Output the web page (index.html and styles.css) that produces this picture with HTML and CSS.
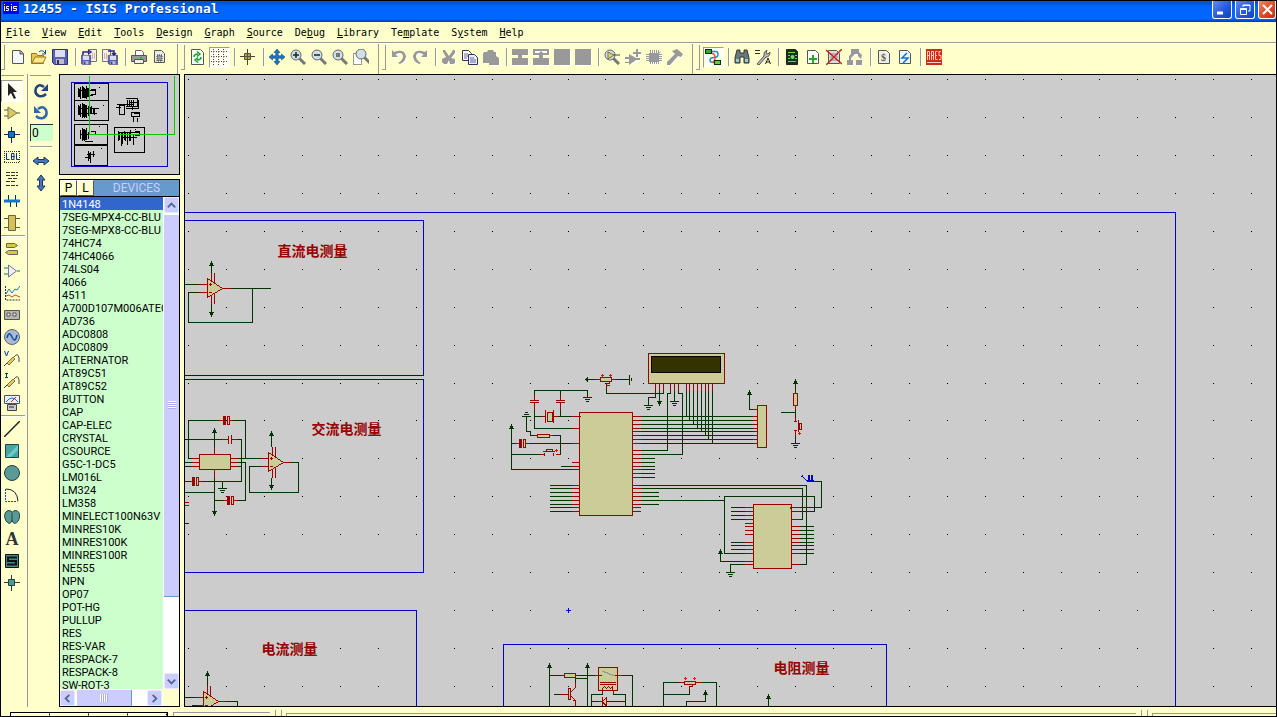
FILE: index.html
```html
<!DOCTYPE html>
<html lang="en">
<head>
    <meta charset="UTF-8">
    <meta name="viewport" content="width=device-width, initial-scale=1.0">
    <title>12455 - ISIS Professional</title>
    <link rel="stylesheet" href="styles.css">
</head>
<body>
<div class="window">
    <header class="titlebar">
        <svg class="logo" width="16" height="12" viewBox="0 0 16 12"><rect width="16" height="12" fill="#00f"/><path d="M1.500 4v5M1.500 2v1M3 8.500h2.500V6.500h-2v-2H6M8.500 4v5M8.500 2v1M10 8.500h3.500V6.500h-3v-2H14" stroke="#fff" fill="none"/></svg>
        <h1>12455 - ISIS Professional</h1>
        <div class="win-buttons">
            <button class="win-btn" aria-label="Minimize"><svg width="18" height="18"><path d="M4 12h6" stroke="#fff" stroke-width="3"/></svg></button>
            <button class="win-btn" aria-label="Restore"><svg width="18" height="18" fill="none" stroke="#fff"><path d="M7 6V4h7v6h-2M7 4.500h7"/><path d="M4.500 7.500h6v6h-6zM4 8.500h7"/></svg></button>
            <button class="win-btn close" aria-label="Close"><svg width="18" height="18"><path d="M4 4l9 9M13 4l-9 9" stroke="#fff" stroke-width="2"/></svg></button>
        </div>
    </header>

    <nav class="menubar">
        <button><u>F</u>ile</button><button><u>V</u>iew</button><button><u>E</u>dit</button><button><u>T</u>ools</button><button><u>D</u>esign</button><button><u>G</u>raph</button><button><u>S</u>ource</button><button>De<u>b</u>ug</button><button><u>L</u>ibrary</button><button>Te<u>m</u>plate</button><button>S<u>y</u>stem</button><button><u>H</u>elp</button>
    </nav>

    <div class="toolbar">
        <div class="group">
            <button aria-label="New"><svg viewBox="0 0 16 16"><path d="M2.500 1.500h8l3 3v10h-11z" fill="#f4f8fc" stroke="#555"/><path d="M10 2v3h3" fill="#aaa" stroke="#555"/></svg></button>
            <button aria-label="Open"><svg viewBox="0 0 16 16"><path d="M.5 14.500v-10h5l1 2h6v8z" fill="#e8c850" stroke="#997a20"/><path d="M1 14l3-6h11l-3 6z" fill="#ffe98a" stroke="#997a20"/><path d="M8 3q3-3 6 1M14.500 1v4H11" fill="none" stroke="#148"/></svg></button>
            <button aria-label="Save"><svg viewBox="0 0 16 16"><use href="#disk"/></svg></button>
            <i class="sep"></i>
            <button aria-label="Import"><svg viewBox="0 0 16 16"><path d="M7.500.500h8v12h-8z" fill="#f4f0ea" stroke="#777"/><path d="M11 5h4M11 7h4M11 9h4" stroke="#c66" stroke-dasharray="1 1"/><g transform="translate(0 6) scale(.62)"><use href="#disk"/></g><path d="M2 6V3h6M7 1l3 2-3 2" fill="none" stroke="#228" stroke-width="1.500"/></svg></button>
            <button aria-label="Export"><svg viewBox="0 0 16 16"><path d="M.5.500h8v12h-8z" fill="#f4f0ea" stroke="#777"/><path d="M2 5h4M2 7h4M2 9h4" stroke="#c66" stroke-dasharray="1 1"/><g transform="translate(6 6) scale(.62)"><use href="#disk"/></g><path d="M6 2h6v3M10 4l2 2 2-2" fill="none" stroke="#228" stroke-width="1.500"/></svg></button>
            <i class="sep"></i>
            <button aria-label="Print"><svg viewBox="0 0 16 16"><path d="M4.500 6V1.500h6l2 2V6" fill="#fff" stroke="#666"/><path d="M.5 6.500h15v6H.5z" fill="#999" stroke="#555"/><path d="M3.500 10.500h9v4h-9z" fill="#eee" stroke="#555"/><path d="M9 8h2v2H9z" fill="#0c0"/></svg></button>
            <button aria-label="Print area"><svg viewBox="0 0 16 16"><path d="M2.500 1.500h7l3 3v9h-10z" fill="#e8ece8" stroke="#555"/><path d="M5 6h5v6H5z" fill="#999" stroke="#333" stroke-dasharray="1 1"/></svg></button>
        </div>
        <div class="group">
            <button aria-label="Redraw"><svg viewBox="0 0 16 16"><path d="M1.500.5h9l3 3v12h-12z" fill="#f5fff5" stroke="#555"/><path d="M4 8q0-3 4-3M7 2.500l3 2.500-3 2.500M11 8q0 3-4 3M8 13.500L5 11l3-2.500" fill="none" stroke="#1a9a30" stroke-width="1.500"/></svg></button>
            <button class="pressed" aria-label="Grid"><svg viewBox="0 0 16 16"><path d="M0 2.500h16M0 7.500h16M0 12.500h16M2.500 0v16M7.500 0v16M12.500 0v16" stroke="#444" stroke-dasharray="1 1.500"/></svg></button>
            <i class="sep"></i>
            <button aria-label="Origin"><svg viewBox="0 0 16 16"><path d="M7.500 0v16M0 7.500h15" stroke="#442"/><path d="M4.500 4.500h6v6h-6z" fill="#b9a23a" stroke="#554"/><path d="M7.500 5v5M5 7.500h5" stroke="#554"/></svg></button>
            <i class="sep"></i>
            <button aria-label="Pan"><svg viewBox="0 0 16 16"><path d="M8 0l3 3.500H9.200v3.300h3.300V5L16 8l-3.500 3V9.200H9.200v3.300H11L8 16l-3-3.500h1.800V9.200H3.500V11L0 8l3.500-3v1.800h3.300V3.500H5z" fill="#1a78d0" stroke="#035" stroke-width=".5"/></svg></button>
            <button aria-label="Zoom in"><svg viewBox="0 0 16 16"><use href="#lens"/><path d="M3 6h6M6 3v6" stroke="#222" stroke-width="1.500"/></svg></button>
            <button aria-label="Zoom out"><svg viewBox="0 0 16 16"><use href="#lens"/><path d="M3 6h6" stroke="#222" stroke-width="1.500"/></svg></button>
            <button aria-label="Zoom all"><svg viewBox="0 0 16 16"><use href="#lens"/><path d="M4 4h4v4H4z" fill="#777"/></svg></button>
            <button aria-label="Zoom area"><svg viewBox="0 0 16 16"><path d="M.5 4.500h8v11h-8z" fill="#fff" stroke="#333" stroke-dasharray="1 1"/><g transform="translate(2 -1)"><use href="#lens"/></g></svg></button>
        </div>
        <div class="group">
            <button class="off" aria-label="Undo"><svg viewBox="0 0 16 16"><path d="M1 1v7h6L4.500 5.500Q11 2 12 7q0 4-5 7l2 1q6-3 6-8Q13-1 3 3z"/></svg></button>
            <button class="off" aria-label="Redo"><svg viewBox="0 0 16 16"><path d="M15 1v7H9l2.500-2.500Q5 2 4 7q0 4 5 7l-2 1Q1 12 1 7 3-1 13 3z"/></svg></button>
            <i class="sep"></i>
            <button class="off" aria-label="Cut"><svg viewBox="0 0 16 16"><path d="M2 1h2l4 6 4-6h2v3l-4 5 4 1v4l-2 1h-3l-1-4-2 4H3l-2-2v-3l4-2-3-5z"/></svg></button>
            <button aria-label="Copy"><svg viewBox="0 0 16 16"><path d="M.5 1.500h6l3 3v7h-9z" fill="#fff" stroke="#335"/><path d="M6.500 5.500h6l3 3v7h-9z" fill="#e4efff" stroke="#335"/><path d="M2 5h4M2 7h4M2 9h3M8 9h4M8 11h6M8 13h6" stroke="#669"/></svg></button>
            <button class="off" aria-label="Paste"><svg viewBox="0 0 16 16"><path d="M1 3h3l1-2h5l1 2h2v4l3 2v7H6v-2H0V5z"/></svg></button>
            <i class="sep"></i>
            <button class="off" aria-label="Block copy"><svg viewBox="0 0 16 16"><path d="M0 0h16v6h-6v3h6v7H0V9h6V6H0z"/></svg></button>
            <button class="off" aria-label="Block move"><svg viewBox="0 0 16 16"><path d="M0 0h16v6h-6v3h6v7H0V9h6V6H0z"/><path d="M2 2h12v2h-4L8 2 6 4H2z" fill="#fff"/></svg></button>
            <button class="off" aria-label="Block rotate"><svg viewBox="0 0 16 16"><path d="M0 0h16v16H0z"/></svg></button>
            <button class="off" aria-label="Block delete"><svg viewBox="0 0 16 16"><path d="M0 0h16v16H0z"/></svg></button>
            <i class="sep"></i>
            <button aria-label="Pick parts"><svg viewBox="0 0 16 16"><use href="#lens"/><path d="M4 3l6 3-6 4z" fill="#dcd27a" stroke="#774"/><path d="M10 6h6" stroke="#444"/></svg></button>
            <button class="off" aria-label="Make device"><svg viewBox="0 0 16 16"><path d="M4 5l7 4h4v2h-4l-7 5v-2H0v-1h4v-3H0V8h4zM11 0h2v3h3v2h-3v3h-2V5H8V3h3z"/></svg></button>
            <button class="off" aria-label="Packaging"><svg viewBox="0 0 16 16"><path d="M3 4h9l3-2-2 3v8H3z"/><path d="M4.500 1v14M6.500 1v14M8.500 1v14M10.500 1v14M12.500 1v14M0 5.500h16M0 7.500h16M0 9.500h16M0 11.500h16" stroke="#999"/></svg></button>
            <button class="off" aria-label="Decompose"><svg viewBox="0 0 16 16"><path d="M5 2l5-2 6 5-2 3-3-1-8 9H0v-3l8-8z"/></svg></button>
        </div>
        <div class="group last">
            <button class="pressed" aria-label="Wire autorouter"><svg viewBox="0 0 16 16"><path d="M6 2.500h5q2 0 2 3t-4 3q-4 0-4 3 0 2 4 2" fill="none" stroke="#28c" stroke-width="1.500"/><path d="M7 4.500q3 0 3 4t-3 5" fill="none" stroke="#e53" stroke-width="1.500"/><rect x=".5" y=".5" width="6" height="4" fill="#3a3" stroke="#030"/><rect x="9.500" y="11.500" width="6" height="4" fill="#6c3" stroke="#030"/></svg></button>
            <i class="sep"></i>
            <button aria-label="Search"><svg viewBox="0 0 16 16"><path d="M3 1h3v3h4V1h3l2 8v5h-5V8H6v6H1V9z" fill="#667a7a" stroke="#333"/><path d="M2 10h3v3H2zM11 10h3v3h-3z" fill="#9cc"/></svg></button>
            <button aria-label="Property assignment"><svg viewBox="0 0 16 16"><path d="M0 1.500h5M0 4.500h5" stroke="#333"/><path d="M2 15l7-8q-1-4 3-6l-1 3 2 1 2-2q0 5-4 5l-7 8z" fill="#bbb" stroke="#555"/><path d="M10.500 15l2.500-6 2.500 6M11 13h4" fill="none" stroke="#222"/></svg></button>
            <i class="sep"></i>
            <button aria-label="Design explorer"><svg viewBox="0 0 16 16"><path d="M2.500.5h9l2 2v13h-11z" fill="#132" stroke="#222"/><path d="M4 3.500h7M4 6.500h2M4 9.500h2M4 12.500h8M11 6.500h2M11 9.500h2" stroke="#6d4"/><circle cx="8.500" cy="8" r="2" fill="#8c8"/></svg></button>
            <button aria-label="New sheet"><svg viewBox="0 0 16 16"><path d="M2.500 1.500h8l3 3v10h-11z" fill="#fff" stroke="#555"/><path d="M8 6v8M4 10h8" stroke="#2a2" stroke-width="2"/></svg></button>
            <button aria-label="Remove sheet"><svg viewBox="0 0 16 16"><path d="M2.500 1.500h8l3 3v10h-11z" fill="#ddd" stroke="#555"/><path d="M4 5h8M4 8h8M4 11h8" stroke="#888"/><path d="M0 1l16 14M16 0L0 16" stroke="#c22" stroke-width="1.500"/></svg></button>
            <button class="off" aria-label="Exit to parent"><svg viewBox="0 0 16 16"><path d="M4 0h8v3l3 3-1 4-3-3V5H8L4 9v2h2v5H0v-5h2V7l2-2zM9 11h6v5H9z"/></svg></button>
            <i class="sep"></i>
            <button aria-label="Bill of materials"><svg viewBox="0 0 16 16"><path d="M2.500 1.500h8l3 3v10h-11z" fill="#eee" stroke="#555"/><text x="5" y="12" class="dollar">$</text></svg></button>
            <button aria-label="Electrical check"><svg viewBox="0 0 16 16"><path d="M2.500 1.500h8l3 3v10h-11z" fill="#eef6ff" stroke="#555"/><path d="M10 4L5 9h6l-5 5" fill="none" stroke="#17c" stroke-width="1.500"/></svg></button>
            <i class="sep"></i>
            <button aria-label="ARES"><svg viewBox="0 0 16 16"><path d="M0 0h16v16H0z" fill="#d32a10"/><path d="M1.500 11V2.500h2V11M1 6.500h3M5.500 11V2.500h2v4h-2M7.500 7v4M11.500 2.500h-2v8h2M9 6.500h2M15 2.500h-2v4h2v4h-2M1 13.500h14" fill="none" stroke="#fcc"/></svg></button>
        </div>
    </div>

    <main class="workspace">
        <aside class="modes">
            <i class="grip-top"></i>
            <button class="pressed" aria-label="Selection"><svg viewBox="0 0 16 16"><path d="M4 0v13l3-3 3 6 2-1-3-6h4z" fill="#222"/></svg></button>
            <button aria-label="Component"><svg viewBox="0 0 16 16"><path d="M4 2l9 6-9 6z" fill="#dcc860" stroke="#775"/><path d="M0 5h4M0 11h4M13 8h3" stroke="#554"/></svg></button>
            <button aria-label="Junction"><svg viewBox="0 0 16 16"><path d="M7.500 0v16M0 7.500h16" stroke="#134"/><path d="M4.500 4.500h6v6h-6z" fill="#17b" stroke="#026"/></svg></button>
            <button aria-label="Wire label"><svg viewBox="0 0 16 16"><path d="M0 2.500h16M0 13.500h16M.5 2v12M15.500 2v12" stroke="#333" stroke-dasharray="1 1"/><path d="M2.500 4v6.500h3M7.500 4.500h2.500v6H7.500zM7.500 7.500h3M12.500 4v6.500h3" fill="none" stroke="#038"/></svg></button>
            <button aria-label="Text script"><svg viewBox="0 0 16 16"><path d="M2 1.500h12M2 4.500h12M4 7.500h10M2 10.500h10M2 14.500h12" stroke="#333" stroke-dasharray="4 1"/></svg></button>
            <button aria-label="Bus"><svg viewBox="0 0 16 16"><path d="M4.500 7v-5M11.500 2v5M6.500 8v6M12.500 8v6" stroke="#035"/><path d="M0 8h16" stroke="#17c" stroke-width="3"/></svg></button>
            <button aria-label="Subcircuit"><svg viewBox="0 0 16 16"><path d="M0 3.500h16M0 12.500h16" stroke="#554"/><path d="M4.500.5h7v15h-7z" fill="#d8c058" stroke="#664"/></svg></button>
            <i class="rule"></i>
            <button aria-label="Terminals"><svg viewBox="0 0 16 16"><path d="M2.500 2.500h8l3 2-3 2h-8zM13.500 9.500h-9l-3 2 3 2h9z" fill="#d8c840" stroke="#665"/></svg></button>
            <button aria-label="Device pins"><svg viewBox="0 0 16 16"><path d="M4.500 2l8 6-8 6z" fill="#eef" stroke="#778"/><path d="M0 5h4M0 11h4M13 8h3" stroke="#07a"/></svg></button>
            <button aria-label="Graph"><svg viewBox="0 0 16 16"><path d="M1.500 1v14h15" fill="none" stroke="#333" stroke-dasharray="2 1"/><path d="M2 9l3-5 3 4 3-4 2 1 3-4" fill="none" stroke="#17c"/><path d="M2 11l3-1 3 2 3-2 5 2" fill="none" stroke="#d42"/></svg></button>
            <button aria-label="Tape recorder"><svg viewBox="0 0 16 16"><path d="M.5 3.500h15v9H.5z" fill="#b5b5ad" stroke="#555"/><path d="M3 6h3v3H3zM9 6h3v3H9z" fill="#eee" stroke="#555"/></svg></button>
            <button aria-label="Generator"><svg viewBox="0 0 16 16"><circle cx="8" cy="8" r="7.500" fill="#b0b8d0" stroke="#567"/><path d="M3 9q2-8 5-1t5-2" fill="none" stroke="#05a" stroke-width="1.500"/></svg></button>
            <button aria-label="Voltage probe"><svg viewBox="0 0 16 16"><path d="M.5 0l2 5 2-5" fill="none" stroke="#03a"/><use href="#probe"/></svg></button>
            <button aria-label="Current probe"><svg viewBox="0 0 16 16"><path d="M1 .5h3M2.500 0v5M1 4.500h3" stroke="#03a"/><use href="#probe"/></svg></button>
            <button aria-label="Instruments"><svg viewBox="0 0 16 16"><path d="M.5.500h15v8H.5z" fill="#eef" stroke="#555"/><path d="M2 7q6-8 12 0" fill="none" stroke="#17c"/><path d="M7 7l5-5" stroke="#d20"/><path d="M3.500 9.500h9v6h-9z" fill="#ccc" stroke="#444"/><path d="M5 12h5" stroke="#222"/></svg></button>
            <i class="rule"></i>
            <button aria-label="Line"><svg viewBox="0 0 16 16"><path d="M0 16L16 0" stroke="#222" stroke-width="1.500"/></svg></button>
            <button aria-label="Box"><svg viewBox="0 0 16 16"><path d="M1.500 1.500h13v13h-13z" fill="#4aa5a0" stroke="#244"/><path d="M2 14L14 2v5l-7 7z" fill="#6cc"/></svg></button>
            <button aria-label="Circle"><svg viewBox="0 0 16 16"><circle cx="8" cy="8" r="7.500" fill="#5a9a96" stroke="#244"/></svg></button>
            <button aria-label="Arc"><svg viewBox="0 0 16 16"><path d="M1.500 2v12.500h12" fill="none" stroke="#05a" stroke-dasharray="2 1"/><path d="M2 2q11 0 12 12" fill="none" stroke="#222"/></svg></button>
            <button aria-label="Path"><svg viewBox="0 0 16 16"><path d="M4 1.500q4 0 4 2 1-2 4-2 4 1 3.500 6-.5 6-5 7-2-1-2.500-3-1 3-3 3-4-2-4.500-7 0-5 3.500-6z" fill="#5a9a96" stroke="#244"/><path d="M8 4v8" stroke="#244"/></svg></button>
            <button class="letter" aria-label="Text">A</button>
            <button aria-label="Symbol"><svg viewBox="0 0 16 16"><path d="M1.500 1.500h13v13h-13z" fill="#488" stroke="#111"/><path d="M13 4.500H4V8h8v3.500H3" fill="none" stroke="#111" stroke-width="2"/></svg></button>
            <button aria-label="Marker"><svg viewBox="0 0 16 16"><path d="M7.500 0v16M0 7.500h16" stroke="#333"/><path d="M4.500 4.500h6v6h-6z" fill="#4a9a9a" stroke="#244"/></svg></button>
        </aside>

        <aside class="orient">
            <i class="grip-top"></i>
            <button aria-label="Rotate clockwise"><svg viewBox="0 0 16 16"><path d="M11 4Q6 0 3 5q-2 6 3 8 4 1 7-2" fill="none" stroke="#247" stroke-width="2.500"/><path d="M15 1v7H8z" fill="#247"/></svg></button>
            <button aria-label="Rotate anticlockwise"><svg viewBox="0 0 16 16"><path d="M5 4q5-4 8 1 2 6-3 8-4 1-7-2" fill="none" stroke="#36a" stroke-width="2.500"/><path d="M1 1v7h7z" fill="#36a"/></svg></button>
            <input type="text" value="0" aria-label="Angle">
            <i class="rule"></i>
            <button aria-label="Mirror horizontally"><svg viewBox="0 0 16 16"><path d="M0 8l5-4v2.500h6V4l5 4-5 4V9.500H5V12z" fill="#47b" stroke="#235"/></svg></button>
            <button aria-label="Mirror vertically"><svg viewBox="0 0 16 16"><path d="M8 0l4 5H9.500v6H12l-4 5-4-5h2.500V5H4z" fill="#47b" stroke="#235"/></svg></button>
        </aside>

        <section class="side">
            <svg class="overview" shape-rendering="crispEdges">
                <g transform="translate(-59.500 -74.500)" fill="none" stroke="#000">
                    <path d="M71 82h96v84H71z" stroke="#00c"/>
                    <path d="M74 83h34v17H74zM74 100h34v20H74zM74 124h33v20H74zM74 145h33v20H74zM114 127h30v25h-30z"/>
                    <path d="M78 87v9M80 86v12M82 85v12M84 87v10M86 85v13M88 87v9M80 90h14M90 89h5v5h-5M84 95h8"/>
                    <path d="M79 88v8M83 86v11M85 88v9M87 87v9"/>
                    <path d="M78 104v10M80 103v13M82 102v15M84 103v14M86 104v13M88 105v10M91 105v8M94 108v6M78 108h20M80 113h16"/>
                    <path d="M79 105v9M83 103v13M85 104v12M90 106v7M93 107v6"/>
                    <path d="M80 129v9M82 127v13M84 128v12M86 127v12M88 131v7M80 134h14M90 131h5v3M84 141h8M83 128v11M85 129v10"/>
                    <path d="M88 150v10M90 151v11M86 154h8M93 150v6M84 157h4M89 152v6"/>
                    <path d="M116 104h4M115 107h5M119 105v9h5v-9zM125 98h12v8h-12M127 99v6M129 99v6M131 99v6M133 99v6M128 102h8M125 108h12M138 99v9M131 112h8v4h-8zM133 116v5M137 117v4M120 104h12M133 113h5M132 106v3"/>
                    <path d="M118 130v10M121 131v14M124 130v9M127 132v12M130 129v11M133 134v10M118 132h20M120 137h16M119 131v8M122 132v11M125 131v9M129 131v9M134 131h5v4h-5"/>
                    <path d="M98 87h1M102 105h1M98 126h1M100 148h1M134 129h1"/>
                    <path d="M89 75v59h85V75" stroke="#0c0"/>
                </g>
            </svg>
            <div class="devices">
                <div class="dev-head"><button>P</button><button>L</button><h2>DEVICES</h2></div>
                <div class="dev-body">
                    <ul role="listbox" aria-label="Devices">
                        <li role="option" aria-selected="true">1N4148</li><li role="option">7SEG-MPX4-CC-BLU</li><li role="option">7SEG-MPX8-CC-BLU</li><li role="option">74HC74</li><li role="option">74HC4066</li><li role="option">74LS04</li><li role="option">4066</li><li role="option">4511</li><li role="option">A700D107M006ATEC</li><li role="option">AD736</li><li role="option">ADC0808</li><li role="option">ADC0809</li><li role="option">ALTERNATOR</li><li role="option">AT89C51</li><li role="option">AT89C52</li><li role="option">BUTTON</li><li role="option">CAP</li><li role="option">CAP-ELEC</li><li role="option">CRYSTAL</li><li role="option">CSOURCE</li><li role="option">G5C-1-DC5</li><li role="option">LM016L</li><li role="option">LM324</li><li role="option">LM358</li><li role="option">MINELECT100N63V</li><li role="option">MINRES10K</li><li role="option">MINRES100K</li><li role="option">MINRES100R</li><li role="option">NE555</li><li role="option">NPN</li><li role="option">OP07</li><li role="option">POT-HG</li><li role="option">PULLUP</li><li role="option">RES</li><li role="option">RES-VAR</li><li role="option">RESPACK-7</li><li role="option">RESPACK-8</li><li role="option">SW-ROT-3</li>
                    </ul>
                    <div class="vscroll">
                        <button aria-label="Scroll up"><svg viewBox="0 0 14 14"><path d="M3 9l4-4 4 4"/></svg></button>
                        <div class="thumb"><i></i></div>
                        <button aria-label="Scroll down"><svg viewBox="0 0 14 14"><path d="M3 5l4 4 4-4"/></svg></button>
                    </div>
                </div>
                <div class="hscroll">
                    <button aria-label="Scroll left"><svg viewBox="0 0 14 14"><path d="M9 3L5 7l4 4"/></svg></button>
                    <div class="thumb"><i></i></div>
                    <button aria-label="Scroll right"><svg viewBox="0 0 14 14"><path d="M5 3l4 4-4 4"/></svg></button>
                </div>
            </div>
        </section>

        <svg class="sheet" shape-rendering="crispEdges">
            <defs>
                <g id="up"><path d="M0 0v5M-1 2h2M-1 3h2M-2 4h4"/></g>
                <g id="down"><path d="M0 0v-5M-1-2h2M-1-3h2M-2-4h4"/></g>
                <g id="gnd"><path d="M-4 0h8M-2 2h4M-1 4h2"/></g>
                <g id="plus"><path d="M-1 0h2M0-1v2" stroke="#f00"/></g>
                <g id="opamp" class="part"><path d="M0 0v19l15-9z"/><path d="M3 5v2M2 6h2M2 14h2M4-5v7M7-5v9M4 17v8M7 15v10M-8 6h8M-8 14h8M15 10h8"/></g>
                <g id="ecap" class="part"><path d="M0-4h2v8H0zM4-4h2v8H4z"/><path d="M1-4v8" stroke-dasharray="2 1"/><path d="M-4 0h4M6 0h4"/></g>
            </defs>
            <g transform="translate(-184.500 -74.500)">
                <g id="dots" fill="#000"></g>
                <g class="frame">
                    <path d="M185 212H1175V706M185 220H423V375H185M185 379H423V572H185M185 610H416V706M503 706V644H886V706"/>
                    <path d="M566 610h4M568 608v4"/>
                </g>

                <!-- dc voltage -->
                <use href="#opamp" x="207" y="278"/>
                <g class="wire">
                    <path d="M211 264V272M185 284H198M198 292H188V322H252V288M231 288H270M211 304V314"/>
                    <use href="#up" x="211" y="261"/><use href="#down" x="211" y="316"/>
                </g>

                <!-- ac voltage -->
                <use href="#opamp" x="268" y="452"/>
                <use href="#ecap" x="223" y="420"/><use href="#ecap" x="192" y="481"/><use href="#ecap" x="227" y="500"/>
                <g class="part">
                    <path d="M199 454H230V469H199z"/>
                    <path d="M192 458H199M192 462H199M192 466H199M231 458H237M231 462H237M231 466H237M214 447V454M214 470V477M222 439H228V435V443M231 435V443M231 439H237M185 502H188M185 505H188"/>
                </g>
                <g class="wire">
                    <path d="M271 434V446M271 478V488M260 466H249V492H298V462H291M191 458H188V420H218M233 420H245V458M238 458H260M185 462H191M185 466H191M238 462H245V500H238M238 466H241M214 430V446M185 439H221M238 439H241V481H203M185 481H188M222 481V488M214 478V513M185 492H214M214 500H222M185 523H188"/>
                    <use href="#up" x="271" y="431"/><use href="#down" x="271" y="489"/><use href="#up" x="214" y="428"/><use href="#down" x="214" y="515"/><use href="#gnd" x="222" y="488"/>
                </g>

                <!-- mcu -->
                <g class="part">
                    <path d="M579 412H632V515H579z"/>
                    <path d="M572 416H580M572 428H579M572 443H579M572 462H579M572 466H579M572 469H579M572 485H579M572 488H579M572 492H579M572 496H579M572 500H579M572 504H579M572 507H579M572 511H579"/>
                    <path d="M633 416H640M633 420H640M633 424H640M633 428H640M633 431H640M633 435H640M633 439H640M633 443H640M633 450H640M633 454H640M633 458H640M633 462H640M633 466H640M633 469H640M633 473H640M633 477H640M633 485H640M633 488H640M633 492H640M633 496H640M633 500H640M633 504H640M633 507H640M633 511H640"/>
                    <path class="body" d="M547 412H552V421H547zM537 434H549V437H537zM546 449H552V451H546zM600 377H611V381H600z"/>
                    <path d="M545 410V422M553 410V422M541 416H545M553 416H557M534 394V400M530 400H538M530 402H538M534 403V409M560 394V400M556 400H564M556 402H564M560 403V409"/>
                    <path d="M533 435H537M550 435H554M543 451H554M539 454H543M556 454H559M544 453v2M553 453v2M594 379H600M611 379H617M609 382V383H606V387M607 385h2"/>
                </g>
                <use href="#ecap" x="519" y="443"/>
                <use href="#plus" x="556" y="450"/><use href="#plus" x="602" y="375"/><use href="#plus" x="610" y="375"/>
                <g class="wire">
                    <path d="M550 485H571M550 488H571M550 492H571M550 496H571M550 500H571M550 504H571M550 507H571M550 511H571M561 466H571M571 469H511V427M530 443H571M511 443H515M571 428H534V410M534 416H541M558 416H571M560 410V416M534 394V390H587V397M560 390V394M526 416V431H530V435H533M554 435H560V454M511 454H539"/>
                    <path d="M522 416H530M524 414H528M525 412H527M585 379H594M617 379H629M629 375V384M631 378V380M606 388V393H663V391"/>
                    <path d="M587 377v4M586 378v2"/>
                    <use href="#up" x="511" y="424"/><use href="#gnd" x="587" y="397"/>
                </g>

                <!-- lcd -->
                <g class="part">
                    <path d="M648 353H724V383H648z"/>
                    <path d="M655 384V390M659 384V390M663 384V390M670 384V390M674 384V390M678 384V390M686 384V390M689 384V390M693 384V390M697 384V390M701 384V390M705 384V390M708 384V390M712 384V390"/>
                </g>
                <path d="M651 356H720V372H651z" fill="#330" stroke="#000"/>
                <g class="wire">
                    <path d="M655 391V397H648V404M659 391V403M670 391V393H667V450H641M674 391V401M678 391V393H682V454H641"/>
                    <path d="M686 391V416M689 391V420M693 391V424M697 391V428M701 391V431M705 391V435M708 391V439M712 391V443"/>
                    <path d="M641 416H752M641 420H752M641 424H752M641 428H752M641 431H752M641 435H752M641 439H752M641 443H752"/>
                    <path d="M641 458H654M641 462H654M641 466H654M641 469H654M641 473H654M641 477H654M641 492H658M641 496H658M641 504H658"/>
                    <use href="#gnd" x="648" y="405"/><use href="#gnd" x="674" y="401"/><use href="#down" x="659" y="405"/>
                </g>

                <!-- connector and reset button -->
                <g class="part">
                    <path d="M757 405H766V447H757zM793 393H797V405H793zM799 423H801V429H799z"/>
                    <path d="M753 409H757M753 416H757M753 420H757M753 424H757M753 428H757M753 431H757M753 435H757M753 439H757M753 443H757M795 390V393M795 406V409M795 417V420M794 421h2M794 430h2M798 420V431M795 431V435"/>
                </g>
                <use href="#plus" x="799" y="433"/>
                <g class="wire">
                    <path d="M752 409H749V393M795 383V389M795 410V417M781 412H795M795 436V443"/>
                    <use href="#up" x="749" y="390"/><use href="#up" x="795" y="379"/><use href="#gnd" x="795" y="443"/>
                </g>

                <!-- adc -->
                <g class="part">
                    <path d="M753 504H791V568H753z"/>
                    <path d="M792 507H799M792 511H799M792 519H799M792 526H799M792 530H799M792 534H799M792 538H799M792 542H799M792 545H799M792 549H799M792 553H799M792 564H799M790 507v1"/>
                    <path d="M745 507H752M745 511H752M745 515H752M745 519H752M745 523H752M745 526H752M745 530H752M745 534H752M745 542H752M745 545H752M745 549H752M745 553H752M745 561H752M745 564H752"/>
                </g>
                <g class="wire">
                    <path d="M641 485H806V564H800M641 488H802V519H800M641 500H724M744 553H724V496H814V511H800M807 481H821V507H800"/>
                    <path d="M800 526H813M800 530H813M800 534H813M800 538H813M800 542H813M800 545H813M800 549H813M800 553H813"/>
                    <path d="M731 507H744M731 511H744M731 515H744M731 519H744M731 542H744M731 545H744M731 549H744M744 561H720V553M744 564H730V572"/>
                    <use href="#up" x="720" y="549"/><use href="#gnd" x="730" y="572"/>
                </g>
                <path class="frame" d="M806 480H813M808 475V480M809 475V480M811 475V480M812 475V480M801 476h1M802 475h0M803 477h0M804 478h0M805 479h0"/>

                <!-- current -->
                <use href="#opamp" x="203" y="691"/>
                <g class="wire">
                    <path d="M207 673V685M185 697H194M192 705H195M227 701H237V706"/>
                    <use href="#up" x="207" y="671"/>
                </g>

                <!-- resistance -->
                <g class="part">
                    <path d="M564 673H575V677H564zM598 667H617V690H598zM568 688H570V699H568zM684 681H695V684H684zM602 701L606 697V706z"/>
                    <path d="M560 675H564M576 675H580M560 694H567M571 691L575 687V682M571 696L575 700V706M573 700h2M594 675H601M614 675H622M600 682H615M600 684H615M602 694V688L604 686L606 688L608 686L610 688L612 686L613 694M602 697V706M597 701H602M678 682H684M696 682H702M692 685V686H689V690"/>
                    <path d="M602 671l4 1 4 2 4 1" stroke="#999"/>
                </g>
                <use href="#plus" x="685" y="678"/><use href="#plus" x="694" y="678"/>
                <g class="wire">
                    <path d="M549 666V706M549 675H560M580 675H594M587 666V706M575 681V678H587M554 694H560M622 675H632V706M602 694H591V706M613 694H625V706M591 701H597M607 701H625"/>
                    <path d="M678 682H663V706M702 682H716V706M663 694H689V690M705 692V701H686V706M768 697V706"/>
                    <use href="#up" x="549" y="663"/><use href="#up" x="587" y="663"/><use href="#up" x="705" y="690"/><use href="#up" x="768" y="694"/>
                </g>

                <g class="caption">
                    <text x="277" y="255">直流电测量</text>
                    <text x="311" y="433">交流电测量</text>
                    <text x="261" y="653">电流测量</text>
                    <text x="773" y="672">电阻测量</text>
                </g>
            </g>
        </svg>
    </main>

    <footer class="statusbar">
        <div class="play"><button aria-label="Play"></button><button aria-label="Step"></button><button aria-label="Pause"></button><button aria-label="Stop"></button></div>
        <div class="field messages"></div>
        <i></i>
        <div class="field sheetname"></div>
        <i></i>
        <div class="field coords"></div>
    </footer>
</div>

<!-- shared icon pieces -->
<svg class="defs" aria-hidden="true">
    <g id="disk"><path d="M.5.500h15v15h-13l-2-2z" fill="#5a62b8" stroke="#336"/><path d="M3 1h10v7H3z" fill="#dde"/><path d="M4 10h8v5H4z" fill="#bbc"/><path d="M5 11h2v4H5z" fill="#336"/></g>
    <g id="lens"><path d="M9 9l6 6" stroke="#777" stroke-width="3"/><circle cx="6" cy="6" r="5" fill="#cfe0e4" stroke="#667"/></g>
    <g id="probe"><path d="M0 15l3-3" stroke="#333"/><path d="M3 12l6-6 2 2-6 6z" fill="#e8c850" stroke="#775"/><path d="M10 6q4-5 5 1v4" fill="none" stroke="#444"/></g>
</svg>

<script>
    // grid dots of the drawing sheet
    const dots = document.getElementById('dots');
    for (let row = 0; row < 30; row++) {
        for (let col = 0; col < 60; col++) {
            const dot = document.createElementNS('http://www.w3.org/2000/svg', 'rect');
            dot.setAttribute('x', Math.round(188 + col * 37.95) - 0.5);
            dot.setAttribute('y', Math.round(79 + row * 37.94) - 0.5);
            dot.setAttribute('width', 1);
            dot.setAttribute('height', 1);
            dots.appendChild(dot);
        }
    }
</script>
</body>
</html>
```

FILE: styles.css
```css
* {
    box-sizing: border-box;
}
body {
    margin: 0;
    background: #ffffcc;
    font-family: "DejaVu Sans Mono", "Noto Sans CJK SC", monospace;
    font-size: 10px;
}
button {
    padding: 0;
    border: none;
    background: none;
    font: inherit;
    color: #000;
}
h1, h2, ul {
    margin: 0;
    padding: 0;
    list-style: none;
}
svg {
    display: block;
}
.defs {
    position: absolute;
    width: 0;
    height: 0;
}
.window {
    display: flex;
    flex-direction: column;
    height: 100vh;
    overflow: hidden;
    border: 1px solid #000;
}

/* title bar */
.titlebar {
    display: flex;
    flex: none;
    height: 21px;
    padding-left: 2px;
    background: linear-gradient(#0058d8, #0058c8 3px, #0066ff 5px, #0066ff 18px, #0033bb);
}
.logo {
    margin-top: 1px;
}
.titlebar h1 {
    flex: 1;
    margin-left: 4px;
    font-size: 13px;
    line-height: 16px;
    color: #fff;
    text-shadow: 1px 1px 0 #003399;
}
.win-buttons {
    display: flex;
    gap: 3px;
}
.win-btn {
    width: 20px;
    height: 18px;
    border: 1px solid #fff;
    border-top: none;
    border-radius: 0 0 3px 3px;
    background: linear-gradient(135deg, #6688ee, #2255dd 60%, #1144bb);
}
.win-btn.close {
    width: 18px;
    background: linear-gradient(135deg, #ee8866, #dd4422 60%, #bb3311);
}

/* menu */
.menubar {
    display: flex;
    flex: none;
    height: 21px;
    border-bottom: 1px solid #999;
}
.menubar button {
    padding: 2px 6px 0;
    line-height: 18px;
}
.menubar button:first-child {
    padding-left: 5px;
}

/* toolbar */
.toolbar {
    display: flex;
    flex: none;
    height: 31px;
    border-top: 1px solid #fff;
}
.group {
    display: flex;
    align-items: center;
    padding-right: 6px;
    padding-bottom: 4px;
    border-right: 1px solid #999;
    margin-right: 3px;
}
.group.last {
    border: none;
}
.group::before {
    content: "";
    width: 3px;
    height: 24px;
    margin-right: 3px;
    border: 1px solid #999;
    border-width: 0 1px 1px 0;
}
.group button,
.modes button,
.orient button {
    display: flex;
    align-items: center;
    justify-content: center;
    width: 21px;
    height: 21px;
}
.group svg,
.modes svg,
.orient svg {
    width: 16px;
    height: 16px;
}
/* buttons are 21px wide, keep the 16px icons on whole pixels */
.group button {
    padding-right: 1px;
}
.sep {
    width: 8px;
    height: 18px;
    border-left: 4px solid transparent;
    background: linear-gradient(90deg, #999 1px, #fff 1px, #fff 2px, transparent 2px);
    background-clip: padding-box;
}
.window .pressed {
    background: #fffff0;
    border: 1px solid;
    border-color: #999 #fff #fff #999;
}
.off svg {
    fill: #999;
    filter: drop-shadow(1px 1px 0 #fff);
}
.dollar {
    font: bold 10px "Liberation Serif", serif;
    fill: #663;
}

/* workspace */
.workspace {
    display: flex;
    flex: 1;
    min-height: 0;
}
.modes {
    width: 27px;
    border-right: 1px solid #999;
}
.modes button {
    width: 22px;
    height: 22px;
}
.modes .letter {
    font: bold 18px/22px "Liberation Serif", serif;
    color: #333;
}
.grip-top {
    display: block;
    height: 2px;
    margin: 0 3px 4px 0;
    border-bottom: 1px solid #999;
}
.rule {
    display: block;
    height: 4px;
    margin-right: 2px;
    background: linear-gradient(transparent 1px, #999 1px, #999 2px, #fff 2px, #fff 3px, transparent 3px);
}
.orient {
    width: 31px;
    padding: 0 5px 0 2px;
}
.orient button {
    height: 22px;
}
.orient input {
    display: block;
    width: 23px;
    height: 17px;
    margin-bottom: 4px;
    padding: 0 1px;
    border: 1px solid #333;
    border-width: 1px 0 0 1px;
    background: #ccffcc;
    font: 12px Roboto, sans-serif;
}
.orient .rule {
    margin-bottom: 1px;
}
.side {
    display: flex;
    flex-direction: column;
    width: 121px;
    margin-right: 4px;
}
.overview {
    flex: none;
    width: 121px;
    height: 101px;
    margin-bottom: 4px;
    border: 1px solid #000;
    background: #ccc;
}
.devices {
    display: flex;
    flex-direction: column;
    flex: 1;
    min-height: 0;
    border: 1px solid #000;
    font-family: Roboto, "Liberation Sans", sans-serif;
    font-size: 11px;
}
.dev-head {
    display: flex;
    flex: none;
    height: 17px;
    border-bottom: 1px solid #000;
    background: #6699cc;
}
.dev-head button {
    width: 17px;
    border: 1px solid;
    border-color: #fff #555 #555 #fff;
    background: #ffffcc;
    font-size: 12px;
    line-height: 14px;
}
.dev-head h2 {
    flex: 1;
    font-size: 12px;
    font-weight: normal;
    line-height: 16px;
    text-align: center;
    color: #ccccff;
}
.dev-body {
    display: flex;
    flex: 1;
    min-height: 0;
}
.dev-body ul {
    flex: 1;
    min-width: 0;
    overflow: hidden;
    background: #ccffcc;
    line-height: 11px;
    white-space: nowrap;
}
.dev-body li {
    padding: 2px 0 0 2px;
}
.dev-body [aria-selected] {
    background: #3366cc;
    color: #fff;
}
.vscroll,
.hscroll {
    display: flex;
    flex: none;
}
.vscroll {
    flex-direction: column;
    justify-content: space-between;
    width: 16px;
    padding-left: 1px;
    background: #fff;
}
.hscroll {
    height: 17px;
    padding-right: 17px;
    border-top: 1px solid #ffffcc;
    background: linear-gradient(90deg, #fff 103px, #ffffcc 103px);
}
.vscroll button,
.hscroll button {
    flex: none;
    width: 15px;
    height: 16px;
    padding: 1px 0;
    background: linear-gradient(135deg, #ccccff 70%, #99ddff);
    border: 1px solid #e8e8ff;
    border-radius: 2px;
}
.vscroll svg,
.hscroll svg {
    width: 13px;
    height: 13px;
    fill: none;
    stroke: #556699;
    stroke-width: 2;
}
.thumb {
    display: flex;
    align-items: center;
    justify-content: center;
    background: #ccccff;
}
.vscroll .thumb {
    height: 78%;
    margin-bottom: auto;
    border-top: 2px solid #fff;
    border-bottom: 1px solid #6699cc;
}
.hscroll .thumb {
    width: 55px;
    margin: 0 auto 0 2px;
    border-right: 1px solid #6699cc;
}
.thumb i {
    width: 8px;
    height: 8px;
    background: repeating-linear-gradient(#fff 0, #fff 1px, #aaaaee 1px, #aaaaee 2px);
}
.hscroll .thumb i {
    background: repeating-linear-gradient(90deg, #fff 0, #fff 1px, #aaaaee 1px, #aaaaee 2px);
}

/* drawing sheet */
.sheet {
    flex: 1;
    min-width: 0;
    height: 100%;
    border: 1px solid #000;
    border-right: none;
    background: #ccc;
    fill: none;
    stroke-linecap: square;
}
.frame {
    stroke: #0000cc;
}
.wire {
    stroke: #003300;
}
.part {
    stroke: #990000;
}
.part path:first-child,
.part .body {
    fill: #cccc99;
}
.caption {
    fill: #990000;
    font: bold 14px "Noto Sans CJK SC", sans-serif;
}

/* status bar */
.statusbar {
    display: flex;
    flex: none;
    height: 9px;
    padding: 5px 0 0 9px;
}
.play {
    display: flex;
    width: 158px;
    margin-right: 5px;
    border: 1px solid #000;
    border-bottom: none;
}
.play button {
    flex: 1;
    border: 1px solid #fff;
    border-right: 1px solid #000;
}
.statusbar i {
    width: 7px;
    margin: -2px 4px 0 5px;
    border: 1px solid #999;
    border-width: 0 1px;
}
.field {
    border-top: 1px solid #999;
    border-left: 1px solid #999;
}
.messages {
    width: 97px;
}
.sheetname {
    flex: 1;
    margin-top: 1px;
}
.coords {
    width: 124px;
    margin-top: 1px;
}
```
